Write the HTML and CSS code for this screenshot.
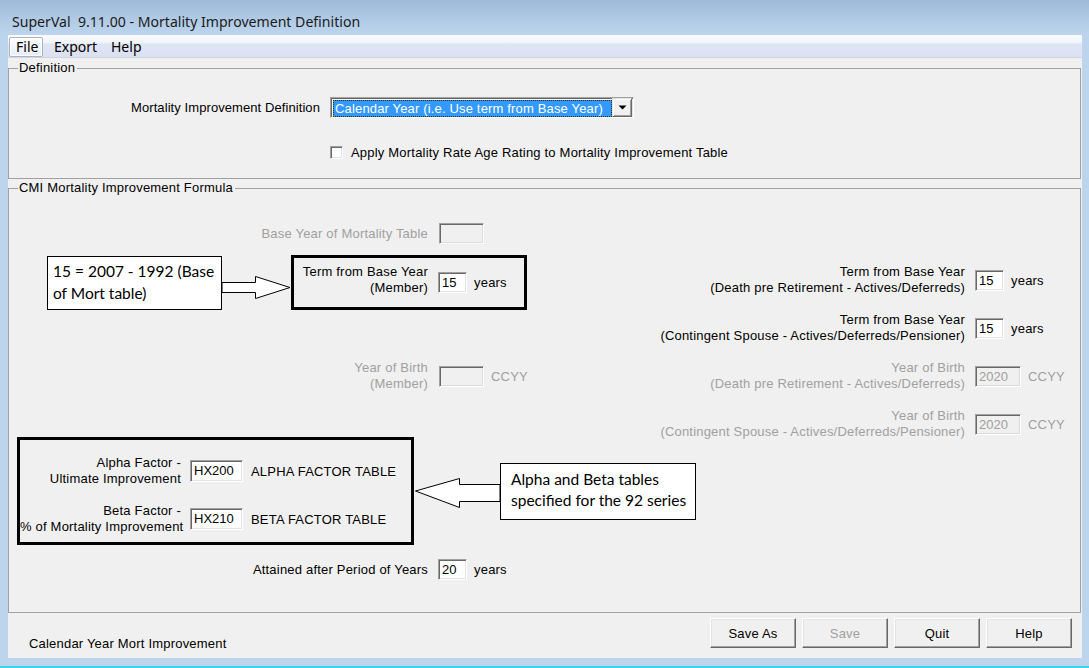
FILE: index.html
```html
<!DOCTYPE html>
<html>
<head>
<meta charset="utf-8">
<title>SuperVal 9.11.00 - Mortality Improvement Definition</title>
<link rel="stylesheet" href="styles.css">
</head>
<body>
<div class="window">
  <div class="titlebar"><span class="title">SuperVal&nbsp; 9.11.00 - Mortality Improvement Definition</span></div>
  <div class="menubar">
    <span class="menu-item menu-file active">File</span>
    <span class="menu-item menu-export">Export</span>
    <span class="menu-item menu-help">Help</span>
  </div>
  <div class="client">
    <fieldset class="group group-def">
      <legend>Definition</legend>
      <div class="def-row">
        <div class="def-label">Mortality Improvement Definition</div>
        <div class="combo">
          <div class="combo-value">Calendar Year (i.e. Use term from Base Year)</div>
          <div class="combo-btn"><svg width="9" height="5" viewBox="0 0 9 5"><path d="M0.5 0.5h8L4.5 4.5z" fill="#000"/></svg></div>
        </div>
      </div>
      <div class="check-row">
        <span class="checkbox"></span>
        <span class="check-label">Apply Mortality Rate Age Rating to Mortality Improvement Table</span>
      </div>
    </fieldset>

    <fieldset class="group group-cmi">
      <legend>CMI Mortality Improvement Formula</legend>

      <div class="field row-base">
        <div class="lbl lbl-left disabled">Base Year of Mortality Table</div>
        <div class="edit edit-wide edit-disabled"></div>
      </div>

      <div class="mid">
        <div class="mid-left">
          <div class="annot-row">
            <div class="note note-1">15 = 2007 - 1992 (Base of Mort table)</div>
            <svg class="arrow arrow-r" width="69" height="55" viewBox="0 0 69 55">
              <polygon points="0,27.5 33.5,27.5 33.5,21.5 68,32.5 33.5,43.5 33.5,37.5 0,37.5" fill="#fff" stroke="#000" stroke-width="1"/>
            </svg>
            <div class="hl-box hl-term">
              <div class="lbl lbl-term">Term from Base Year<br>(Member)</div>
              <div class="edit edit-short">15</div>
              <span class="unit">years</span>
            </div>
          </div>
          <div class="field row-yob">
            <div class="lbl lbl-left disabled">Year of Birth<br>(Member)</div>
            <div class="edit edit-wide edit-disabled"></div>
            <span class="unit unit-ccyy disabled">CCYY</span>
          </div>
        </div>

        <div class="mid-right">
          <div class="field r-item">
            <div class="lbl lbl-right">Term from Base Year<br>(Death pre Retirement - Actives/Deferreds)</div>
            <div class="edit edit-short">15</div>
            <span class="unit">years</span>
          </div>
          <div class="field r-item">
            <div class="lbl lbl-right">Term from Base Year<br>(Contingent Spouse - Actives/Deferreds/Pensioner)</div>
            <div class="edit edit-short">15</div>
            <span class="unit">years</span>
          </div>
          <div class="field r-item">
            <div class="lbl lbl-right disabled">Year of Birth<br>(Death pre Retirement - Actives/Deferreds)</div>
            <div class="edit edit-yob edit-disabled">2020</div>
            <span class="unit unit-ccyy disabled">CCYY</span>
          </div>
          <div class="field r-item">
            <div class="lbl lbl-right disabled">Year of Birth<br>(Contingent Spouse - Actives/Deferreds/Pensioner)</div>
            <div class="edit edit-yob edit-disabled">2020</div>
            <span class="unit unit-ccyy disabled">CCYY</span>
          </div>
        </div>
      </div>

      <div class="alpha-row">
        <div class="hl-box hl-alpha">
          <div class="field alpha-line">
            <div class="lbl lbl-alpha">Alpha Factor -<br>Ultimate Improvement</div>
            <div class="edit edit-table">HX200</div>
            <span class="table-name">ALPHA FACTOR TABLE</span>
          </div>
          <div class="field alpha-line">
            <div class="lbl lbl-alpha">Beta Factor -<br>% of Mortality Improvement</div>
            <div class="edit edit-table">HX210</div>
            <span class="table-name">BETA FACTOR TABLE</span>
          </div>
        </div>
        <svg class="arrow arrow-l" width="86" height="80" viewBox="0 0 86 80">
          <polygon points="86,47.5 45.5,47.5 45.5,41.5 1.5,54 45.5,70.5 45.5,64.5 86,64.5" fill="#fff" stroke="#000" stroke-width="1"/>
        </svg>
        <div class="note note-2">Alpha and Beta tables<br>specified for the 92 series</div>
      </div>

      <div class="field row-attained">
        <div class="lbl lbl-left">Attained after Period of Years</div>
        <div class="edit edit-short">20</div>
        <span class="unit">years</span>
      </div>
    </fieldset>

    <div class="footer">
      <span class="status">Calendar Year Mort Improvement</span>
      <div class="buttons">
        <button class="btn">Save As</button>
        <button class="btn" disabled>Save</button>
        <button class="btn">Quit</button>
        <button class="btn">Help</button>
      </div>
    </div>
  </div>
</div>
</body>
</html>
```

FILE: styles.css
```css
* { box-sizing: border-box; }

html, body {
  margin: 0;
  padding: 0;
  background: #bcd4ec;
}

body {
  font-family: "Liberation Sans", Arial, sans-serif;
  font-size: 13px;
  letter-spacing: 0.2px;
  color: #000;
}

.window {
  width: 1089px;
  height: 668px;
  display: flex;
  flex-direction: column;
  background: #bcd4ec;
  border-bottom: 2px solid #3cd2ee;
  overflow: hidden;
}

/* ---------- title bar ---------- */
.titlebar {
  height: 35px;
  flex: none;
  background: linear-gradient(to bottom, #9db9d8 0%, #b3cce6 60%, #bcd4ec 100%);
  padding-left: 12px;
  display: flex;
  align-items: center;
  padding-top: 7px;
}

.title {
  font-family: "Noto Sans", "Open Sans", sans-serif;
  font-size: 14.1px;
  letter-spacing: 0;
  color: #1b1b1b;
  white-space: pre;
}

/* ---------- menu bar ---------- */
.menubar {
  height: 23px;
  flex: none;
  margin: 0 7px 0 8px;
  padding: 2px 0 0 1px;
  background: linear-gradient(to bottom, #fafbfe 0%, #f1f4fb 35%, #e0e5f4 40%, #dbe1f3 100%);
  border-bottom: 1px solid #d0d4de;
  display: flex;
  align-items: flex-start;
  font-family: "Noto Sans", "Open Sans", sans-serif;
  font-size: 14px;
  letter-spacing: 0;
  color: #000;
}

.menu-item {
  height: 20px;
  line-height: 18px;
  padding-left: 7px;
  border: 1px solid transparent;
  border-radius: 2px;
}

.menu-file { width: 34px; padding-left: 6px; }
.menu-export { width: 57px; margin-left: 3px; }
.menu-help { width: 45px; }

.menu-item.active {
  border-color: #a9b3c6;
  background: linear-gradient(to bottom, #fdfdfe, #e9ecf4);
  box-shadow: inset 0 0 0 1px rgba(255,255,255,0.8);
}

/* ---------- client ---------- */
.client {
  height: 600px;
  flex: none;
  margin: 0 7px 0 8px;
  background: #f0f0f0;
  display: flex;
  flex-direction: column;
}

.group {
  margin: 0 1px 0 0;
  padding: 0;
  border: 1px solid #a0a0a0;
  min-width: 0;
}

.group legend {
  margin-left: 9px;
  padding: 0 2px 0 1px;
  font-size: 13px;
  line-height: 14px;
  height: 14px;
}

.group-def {
  margin-top: 3px;
  padding-bottom: 19px;
}

.group-cmi {
  margin-top: 2px;
  padding-bottom: 32px;
}

/* definition group */
.def-row {
  margin-top: 22px;
  height: 21px;
  display: flex;
  align-items: center;
}

.def-label {
  width: 311px;
  text-align: right;
  letter-spacing: 0.08px;
}

.combo {
  margin-left: 10px;
  width: 304px;
  height: 21px;
  display: flex;
  padding: 1px 1px 1px 2px;
  background: #fff;
  border: 1px solid;
  border-color: #a0a0a0 #fff #fff #a0a0a0;
  box-shadow: inset 1px 1px 0 #696969, inset -1px -1px 0 #e3e3e3;
}

.combo-value {
  flex: 1;
  margin: 1px 0 0 0;
  height: 17px;
  background: #3399ff;
  color: #fff;
  line-height: 15px;
  padding-left: 1px;
  border: 1px dotted #3b2a10;
  white-space: nowrap;
  overflow: hidden;
  letter-spacing: 0.16px;
}

.combo-btn {
  width: 20px;
  height: 19px;
  margin-top: -1px;
  background: #f0f0f0;
  border: 1px solid;
  border-color: #e3e3e3 #696969 #696969 #e3e3e3;
  box-shadow: inset 1px 1px 0 #fff, inset -1px -1px 0 #a0a0a0;
  display: flex;
  align-items: center;
  justify-content: center;
}

.check-row {
  margin-top: 28px;
  height: 13px;
  display: flex;
  align-items: center;
  padding-left: 321px;
}

.checkbox {
  width: 13px;
  height: 13px;
  background: #fff;
  border: 1px solid;
  border-color: #a0a0a0 #fff #fff #a0a0a0;
  box-shadow: inset 1px 1px 0 #696969, inset -1px -1px 0 #e3e3e3;
}

.check-label {
  margin-left: 8px;
  white-space: nowrap;
}

/* ---------- generic fields ---------- */
.field {
  display: flex;
  align-items: center;
}

.lbl {
  text-align: right;
  line-height: 16px;
  white-space: nowrap;
}

.disabled { color: #a0a0a0; }

.edit {
  height: 21px;
  background: #fff;
  border: 1px solid;
  border-color: #a0a0a0 #fff #fff #a0a0a0;
  box-shadow: inset 1px 1px 0 #696969, inset -1px -1px 0 #e3e3e3;
  padding: 2px 0 0 3px;
  line-height: 16px;
  white-space: nowrap;
  flex: none;
  letter-spacing: 0;
}

.edit-disabled {
  background: #f0f0f0;
  color: #a0a0a0;
  border-color: #a0a0a0 #fff #fff #a0a0a0;
  box-shadow: inset 1px 1px 0 #696969, inset -1px -1px 0 #dcdcdc;
}

.edit-short { width: 29px; }
.edit-wide { width: 45px; }
.edit-yob { width: 46px; }
.edit-table { width: 53px; height: 22px; }

.unit { margin-left: 7px; }
.unit-ccyy { margin-left: 7px; }

.lbl-left { width: 419px; }

.row-base {
  margin-top: 28px;
  height: 21px;
}
.row-base .edit { margin-left: 11px; }

/* ---------- mid block ---------- */
.mid {
  margin-top: 11px;
  height: 182px;
  display: flex;
}

.mid-left {
  width: 631px;
  flex: none;
}

.annot-row {
  display: flex;
  align-items: flex-start;
  height: 55px;
}

.note {
  background: #fff;
  border: 1px solid #000;
  font-family: "Lato", "Noto Sans", sans-serif;
  letter-spacing: 0;
  color: #000;
}

.note-1 {
  margin-left: 38px;
  margin-top: 1px;
  width: 175px;
  height: 54px;
  padding: 3px 0 0 5px;
  font-size: 15.5px;
  line-height: 22px;
}

.arrow { display: block; flex: none; }

.hl-box {
  border: 3px solid #000;
  flex: none;
}

.hl-term {
  width: 236px;
  height: 55px;
  display: flex;
  align-items: center;
}

.lbl-term {
  width: 134px;
  margin-bottom: 5px;
}

.hl-term .edit { margin-left: 10px; }

.row-yob {
  margin-top: 50px;
  height: 32px;
}
.row-yob .edit { margin-left: 11px; }

.mid-right {
  flex: 1;
  padding-top: 9px;
  display: flex;
  flex-direction: column;
  gap: 16px;
}

.r-item { height: 32px; }
.lbl-right { width: 325px; }
.r-item .edit { margin-left: 10px; }
.r-item .unit { margin-left: 7px; }

/* ---------- alpha / beta ---------- */
.alpha-row {
  height: 107px;
  display: flex;
  align-items: flex-start;
}

.hl-alpha {
  margin-left: 8px;
  width: 397px;
  height: 108px;
  padding-top: 15px;
  display: flex;
  flex-direction: column;
  gap: 16px;
}

.alpha-line { height: 32px; }
.lbl-alpha { width: 161px; }
.alpha-line .edit { margin-left: 9px; }
.table-name { margin-left: 8px; }

.note-2 {
  margin-top: 26px;
  width: 196px;
  height: 57px;
  padding: 5px 0 0 10px;
  font-size: 15.5px;
  line-height: 21px;
}

.row-attained {
  margin-top: 15px;
  height: 21px;
}
.row-attained .edit { margin-left: 10px; }

/* ---------- footer ---------- */
.footer {
  flex: 1;
  display: flex;
  justify-content: space-between;
  align-items: flex-start;
  padding: 5px 10px 0 21px;
}

.status {
  margin-top: 18px;
  line-height: 15px;
}

.buttons {
  display: flex;
  gap: 6px;
}

.btn {
  width: 86px;
  height: 30px;
  font-family: "Liberation Sans", Arial, sans-serif;
  font-size: 13px;
  letter-spacing: 0.2px;
  color: #000;
  background: #f0f0f0;
  border: 1px solid;
  border-color: #fff #696969 #696969 #fff;
  box-shadow: inset -1px -1px 0 #a0a0a0, inset 1px 1px 0 #e3e3e3;
  padding: 0;
  margin: 0;
}

.btn:disabled {
  color: #a0a0a0;
}
```
